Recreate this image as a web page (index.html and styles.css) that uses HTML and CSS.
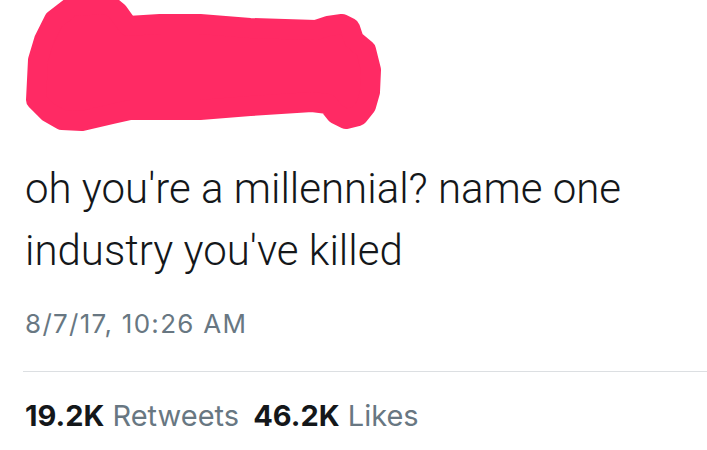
FILE: index.html
```html
<!DOCTYPE html>
<html>
<head>
<meta charset="utf-8">
<link rel="stylesheet" href="styles.css">
</head>
<body>
<div class="tweet">
  <svg class="redact" width="400" height="140" viewBox="0 0 400 140">
    <path d="M38 60 L36 100 L48 112 L62 120 L82 121 L112 114 L130 110 L200 110 L250 106 L312 102 L328 104 L336 114 L346 119 L358 116 L366 106 L370 92 L371 70 L366 50 L354 40 L350 28 L342 24 L328 26 L316 30 L250 28 L200 24 L160 24 L128 26 L118 12 L108 4 L72 6 L54 20 L44 40 Z" fill="#ff2a64" stroke="#ff2a64" stroke-width="20" stroke-linejoin="round"/>
  </svg>
  <p class="text">oh you're a millennial? name one industry you've killed</p>
  <div class="date">8/7/17, 10:26 AM</div>
  <div class="stats">
    <span class="num">19.2K</span> <span class="label">Retweets</span>
    <span class="num num2">46.2K</span> <span class="label">Likes</span>
  </div>
</div>
</body>
</html>
```
FILE: styles.css
```css
html, body {
  margin: 0;
  padding: 0;
  background: #ffffff;
}
.tweet {
  width: 707px;
  font-family: Roboto, "Liberation Sans", sans-serif;
}
.redact {
  display: block;
}
.text {
  margin: 18px 0 0 0;
  padding-left: 25px;
  width: 620px;
  font-size: 42px;
  font-weight: 300;
  line-height: 62px;
  color: #14171a;
}
.date {
  margin: 27px 0 0 23px;
  padding: 0 0 32px 2px;
  font-family: Inter, Roboto, sans-serif;
  font-size: 26px;
  line-height: 30px;
  font-weight: 400;
  letter-spacing: 1.3px;
  color: #687782;
  border-bottom: 1px solid #dcdfe2;
}
.stats {
  padding: 27px 0 0 25px;
  font-family: Inter, Roboto, sans-serif;
  font-size: 29px;
  line-height: 34px;
  letter-spacing: 0;
  color: #687782;
}
.num {
  font-weight: 700;
  color: #14171a;
}
.num2 {
  margin-left: 6px;
}
```
